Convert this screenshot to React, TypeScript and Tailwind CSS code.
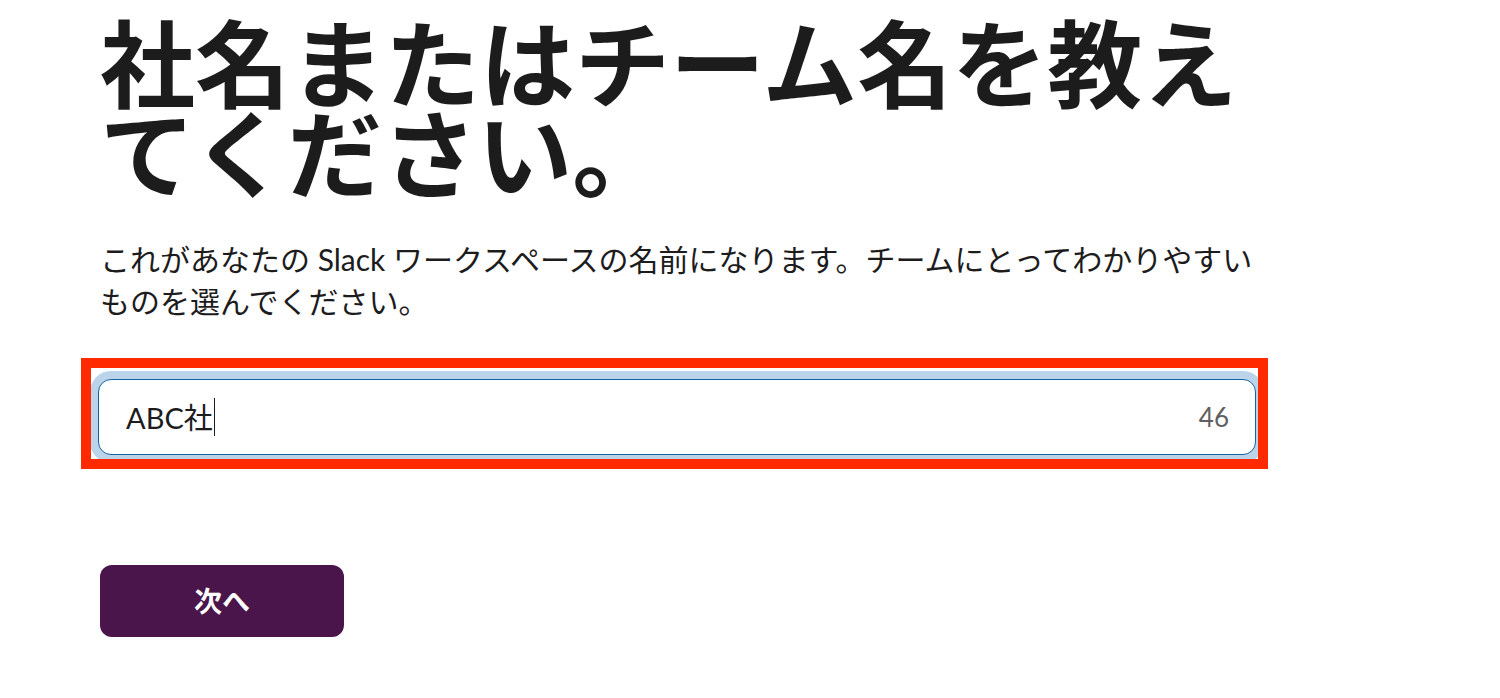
import React from "react";

const App: React.FC = () => {
  const teamName = "ABC社";
  const maxLength = 50;

  return (
    <div className="min-h-screen bg-white font-['Lato','Noto_Sans_CJK_JP',sans-serif] text-[#1d1c1d]">
      <div className="w-[1268px] pl-[100px] pt-[19px]">
        <h1 className="text-[95px] font-bold leading-[90px]">
          社名またはチーム名を教えてください。
        </h1>

        <p className="mt-[39px] text-[30px] leading-[42px]">
          これがあなたの Slack ワークスペースの名前になります。チームにとってわかりやすいものを選んでください。
        </p>

        {/* Annotation frame around the input */}
        <div className="-ml-[19px] mt-[36px] border-[10px] border-[#ff2a00]">
          <div className="overflow-hidden bg-white pl-[7px] pr-[2px] pt-[11px] pb-[4px]">
            <div className="flex h-[76px] items-center rounded-[13px] border-[1.5px] border-[#1264a3] bg-white pl-[27px] pr-[26px] shadow-[0_0_0_8px_#bcd4e9]">
              <span className="text-[29px] leading-none">{teamName}</span>
              <span className="ml-[1px] h-[38px] w-[1.5px] bg-[#1d1c1d]" />
              <span className="ml-auto text-[26px] leading-none text-[#616061]">
                {maxLength - teamName.length}
              </span>
            </div>
          </div>
        </div>

        <button className="mt-[96px] flex h-[72px] w-[244px] items-center justify-center rounded-[12px] bg-[#4a154b] text-[28px] font-bold text-white">
          次へ
        </button>
      </div>
    </div>
  );
};

export default App;
